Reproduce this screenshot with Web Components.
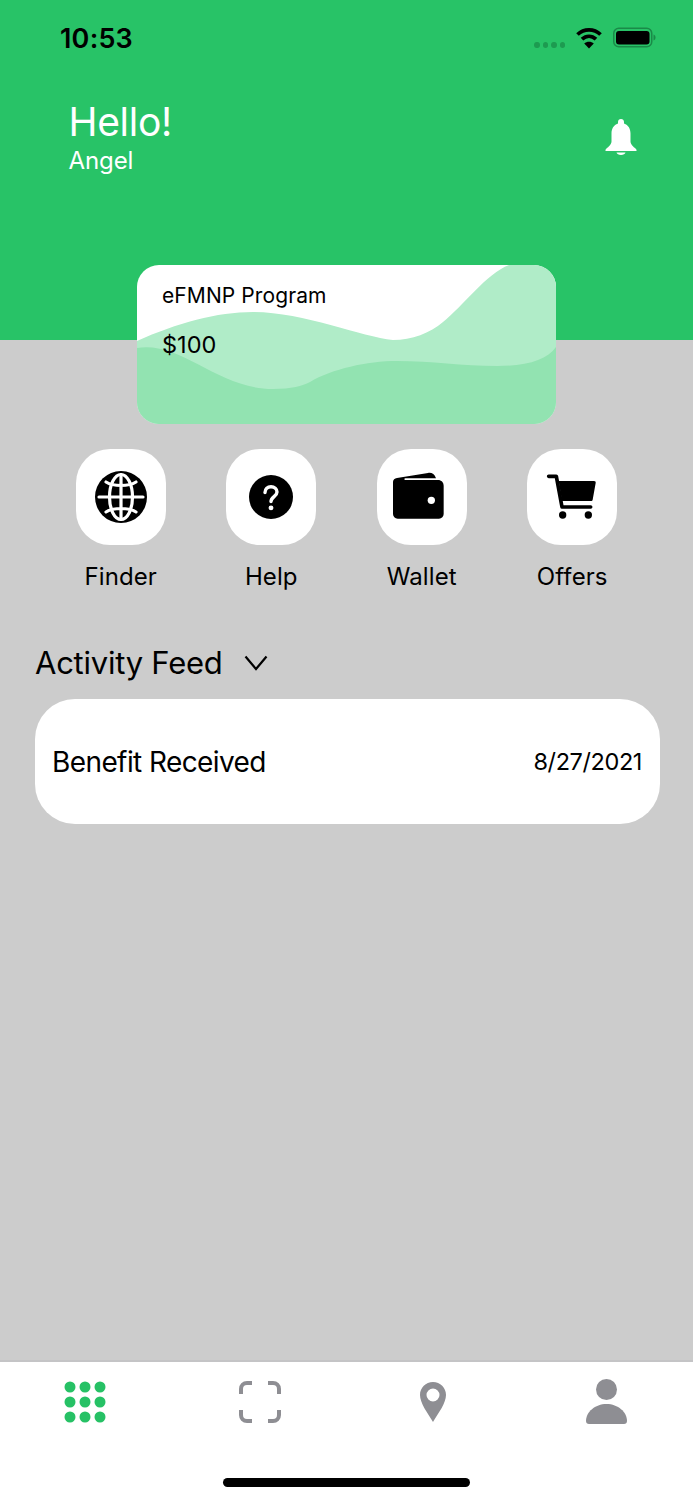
<!DOCTYPE html>
<html>
<head>
<meta charset="utf-8">
<title>Home</title>
<style>
  html, body { margin: 0; padding: 0; }
  body { font-family: Inter, "Noto Sans", sans-serif; color: #000; background: #ccc; }
</style>
</head>
<body>
<app-screen>
  <hero-header slot="hero" greeting="Hello!" name="Angel"></hero-header>
  <benefit-card slot="card" title="eFMNP Program" amount="$100"></benefit-card>
  <quick-row slot="actions">
    <quick-action>
      <svg slot="icon" style="margin-bottom:1px" width="54" height="54" viewBox="0 0 54 54">
        <circle cx="27" cy="27" r="26" fill="#000"/>
        <g fill="none" stroke="#fff" stroke-width="3.200" stroke-linecap="round">
          <ellipse cx="27" cy="27" rx="11.500" ry="22.500"/>
          <path d="M27 4.500v45M5 27h44M12 12c4 2.500 9 3.500 15 3.500S38 14.500 42 12M12 42c4-2.500 9-3.500 15-3.500S38 39.500 42 42"/>
        </g>
      </svg>
      Finder
    </quick-action>
    <quick-action>
      <svg slot="icon" style="margin-bottom:1px" width="44" height="44" viewBox="0 0 44 44">
        <circle cx="22" cy="22" r="22" fill="#000"/>
        <path d="M16 17.500c0-3.600 2.600-5.800 6-5.800s6 2.200 6 5.200c0 4.600-6 4.800-6 9.600" fill="none" stroke="#fff" stroke-width="3.400" stroke-linecap="round"/>
        <circle cx="22" cy="32.800" r="2.400" fill="#fff"/>
      </svg>
      Help
    </quick-action>
    <quick-action>
      <svg slot="icon" style="margin:0 8px 3px 0" width="52" height="47" viewBox="0 0 156 141">
        <path d="M3 30C3 24 8 19 15 18L108 3c10-2 20 3 24 16H40c-4 0-4 5 0 5h98c10 0 17 7 17 17v85c0 8-6 14-14 14H17c-8 0-14-6-14-14Z" fill="#000"/>
        <circle cx="118" cy="85" r="11" fill="#fff"/>
      </svg>
      Wallet
    </quick-action>
    <quick-action>
      <svg slot="icon" style="margin:0 2px 2px 0" width="52" height="46.670" viewBox="555 98 156 140">
        <path d="M566 108h23l17 92h86" fill="none" stroke="#000" stroke-width="11" stroke-linecap="round" stroke-linejoin="round"/>
        <path d="M596 122h106c4 0 6 2 5 6l-9 50c-1 3-2 4-5 4h-87Z" fill="#000"/>
        <circle cx="608" cy="224" r="11" fill="#000"/>
        <circle cx="685" cy="224" r="11" fill="#000"/>
      </svg>
      Offers
    </quick-action>
  </quick-row>
  <activity-feed slot="feed" title="Activity Feed">
    <feed-item date="8/27/2021">Benefit Received</feed-item>
  </activity-feed>
  <tab-bar slot="tabs"></tab-bar>
</app-screen>

<script>
// small helper, every element just sets its template once
class BaseEl extends HTMLElement {
  constructor() {
    super();
    this.attachShadow({ mode: 'open' });
  }
  connectedCallback() {
    this.shadowRoot.innerHTML = this.template();
  }
  template() { return ''; }
}

class AppScreen extends BaseEl {
  template() {
    return `<style>
      :host { display: flex; flex-direction: column; width: 693px; height: 1500px; background: #ccc; overflow: hidden; }
      .main { flex: 1; display: flex; flex-direction: column; }
    </style>
    <slot name="hero"></slot>
    <div class="main">
      <slot name="card"></slot>
      <slot name="actions"></slot>
      <slot name="feed"></slot>
    </div>
    <slot name="tabs"></slot>`;
  }
}

class StatusBar extends BaseEl {
  template() {
    return `<style>
      :host { display: flex; align-items: flex-start; justify-content: space-between; height: 76px; padding: 0 37px 0 60px; box-sizing: border-box; }
      .time { font: 600 27px/30px Inter, sans-serif; color: #000; margin-top: 24px; letter-spacing: .2px; }
      .icons { display: flex; align-items: flex-start; margin-top: 26px; }
      .dots { display: flex; gap: 3px; margin-top: 16px; margin-right: 11px; }
      .dots i { width: 5.500px; height: 6px; border-radius: 50%; background: #1d9b50; }
      svg { display: block; }
      .wifi { margin-right: 11px; }
    </style>
    <div class="time">10:53</div>
    <div class="icons">
      <div class="dots"><i></i><i></i><i></i><i></i></div>
      <svg class="wifi" width="26" height="23" viewBox="0 0 26 23">
        <path d="M1.500 8.500c6.500-6.200 16.500-6.200 23 0M6 13.200c4.200-3.800 9.800-3.800 14 0" fill="none" stroke="#000" stroke-width="3.800"/>
        <path d="M13 22.500 8.200 17.500c2.700-2.200 6.900-2.200 9.600 0Z" fill="#000"/>
      </svg>
      <svg width="43" height="22" viewBox="0 0 43 22">
        <rect x=".75" y="2.250" width="38" height="18.500" rx="5" fill="none" stroke="#1a8a48" stroke-width="1.500"/>
        <rect x="3" y="5" width="33.500" height="13.500" rx="3" fill="#000"/>
        <path d="M40.500 8.500v6c1.500-.6 2-1.800 2-3s-.5-2.400-2-3Z" fill="#1a8a48"/>
      </svg>
    </div>`;
  }
}

class HeroHeader extends BaseEl {
  template() {
    return `<style>
      :host { display: block; height: 340px; background: #28c367; color: #fff; }
      .row { display: flex; justify-content: space-between; padding: 22px 56px 0 68.500px; }
      h1 { margin: 0; font: 400 39px/48px Inter, sans-serif; letter-spacing: -.3px; }
      p { margin: 0; font: 400 24px/30px Inter, sans-serif; letter-spacing: -.1px; }
      svg { display: block; margin-top: 21px; }
    </style>
    <status-bar></status-bar>
    <div class="row">
      <div><h1>${this.getAttribute('greeting')}</h1><p>${this.getAttribute('name')}</p></div>
      <svg width="32" height="36" viewBox="0 0 32 36">
        <path d="M16 0c1.800 0 3 1.300 3 3v1.500c4.500 1.600 6.500 5.400 6.500 10v8c0 2.500 3 5.500 5 7 .6.500 1 1 1 1.500v1H.5v-1c0-.5.400-1 1-1.500 2-1.500 5-4.500 5-7v-8c0-4.600 2-8.400 6.500-10V3c0-1.700 1.200-3 3-3Z" fill="#fff"/>
        <path d="M11.500 33.500h9c-.3 1.500-2.200 2.500-4.500 2.500s-4.200-1-4.500-2.500Z" fill="#fff"/>
      </svg>
    </div>`;
  }
}

class BenefitCard extends BaseEl {
  template() {
    return `<style>
      :host { display: block; position: relative; width: 419px; height: 159px; margin: -75px 0 0 137px; border-radius: 22px; overflow: hidden; background: #fff; }
      svg { position: absolute; inset: 0; display: block; }
      .txt { position: relative; padding: 18px 0 0 25px; }
      .title { font: 400 21px/26px Inter, sans-serif; letter-spacing: .1px; }
      .amt { font: 400 23.500px/30px Inter, sans-serif; margin: 21px 0 0 0; }
    </style>
    <svg width="419" height="159" viewBox="0 0 419 159">
      <path d="M0 76C40 58 80 47 116 47c50 0 109 25 140 28C275 75 293 68 306 57 325 42 350 8 372 0h47v159H0Z" fill="#b0ecc8"/>
      <path d="M0 83c45-7 80 41 136 41 19 0 29-3 37-7 22-13 57-21 87-21 35 0 65 5 100 5 30 0 50-6 59-19v77H0Z" fill="#92e3b1"/>
    </svg>
    <div class="txt">
      <div class="title">${this.getAttribute('title')}</div>
      <div class="amt">${this.getAttribute('amount')}</div>
    </div>`;
  }
}

class QuickRow extends BaseEl {
  template() {
    return `<style>
      :host { display: grid; grid-template-columns: repeat(4, 150.500px); padding-left: 45.500px; margin-top: 25px; }
    </style><slot></slot>`;
  }
}

class QuickAction extends BaseEl {
  template() {
    return `<style>
      :host { display: flex; flex-direction: column; align-items: center; font: 400 24px/30px Inter, sans-serif; letter-spacing: .1px; }
      .tile { width: 90px; height: 96px; border-radius: 34px; background: #fff; display: flex; align-items: center; justify-content: center; margin-bottom: 17px; }
    </style>
    <div class="tile"><slot name="icon"></slot></div>
    <slot></slot>`;
  }
}

class ActivityFeed extends BaseEl {
  template() {
    return `<style>
      :host { display: block; margin: 52px 33px 0 35px; }
      .head { display: flex; align-items: center; height: 38px; margin-bottom: 17px; }
      h2 { margin: 0; font: 400 31px/38px Inter, sans-serif; letter-spacing: -.25px; }
      svg { margin-left: 21px; display: block; }
    </style>
    <div class="head">
      <h2>${this.getAttribute('title')}</h2>
      <svg width="24" height="16" viewBox="0 0 24 16"><path d="M1.500 1.500 12 14 22.500 1.500" fill="none" stroke="#000" stroke-width="2.200"/></svg>
    </div>
    <slot></slot>`;
  }
}

class FeedItem extends BaseEl {
  template() {
    return `<style>
      :host { display: flex; align-items: center; justify-content: space-between; height: 125px; padding: 0 18px 0 17px; box-sizing: border-box; background: #fff; border-radius: 40px; }
      .label { font: 400 28px/34px Inter, sans-serif; letter-spacing: -.6px; }
      .date { font: 400 23.500px/30px Inter, sans-serif; letter-spacing: -.4px; }
    </style>
    <span class="label"><slot></slot></span>
    <span class="date">${this.getAttribute('date')}</span>`;
  }
}

class TabBar extends BaseEl {
  template() {
    const dots = [];
    for (const y of [6, 21, 36]) for (const x of [6, 21, 36]) dots.push(`<circle cx="${x}" cy="${y}" r="5.500"/>`);
    return `<style>
      :host { display: block; height: 140px; background: #fff; border-top: 2px solid #c4c4c6; box-sizing: border-box; }
      .tabs { display: grid; grid-template-columns: 173px 174px 172px 174px; height: 62px; padding-top: 17px; align-items: start; justify-items: center; }
      .tabs svg { display: block; }
      .bar { width: 247px; height: 9px; border-radius: 5px; background: #000; margin: 37px auto 0; }
    </style>
    <div class="tabs">
      <svg style="margin:2px 3px 0 0" width="42" height="42" viewBox="0 0 42 42" fill="#26c165">${dots.join('')}</svg>
      <svg style="margin-top:2px" width="42" height="42" viewBox="0 0 42 42" fill="none" stroke="#8e8e93" stroke-width="4">
        <path d="M2 13V8c0-3.500 2.500-6 6-6h5M29 2h5c3.500 0 6 2.500 6 6v5M40 29v5c0 3.500-2.500 6-6 6h-5M13 40H8c-3.500 0-6-2.500-6-6v-5"/>
      </svg>
      <svg style="margin-top:3px" width="26" height="40" viewBox="0 0 26 40">
        <path fill-rule="evenodd" d="M13 0c7.200 0 13 5.800 13 13 0 8-7.500 18-13 27C7.500 31 0 21 0 13 0 5.800 5.800 0 13 0Zm0 6.500a6.500 6.500 0 1 0 0 13 6.500 6.500 0 0 0 0-13Z" fill="#8e8e93"/>
      </svg>
      <svg width="41" height="45" viewBox="0 0 41 45" fill="#8e8e93">
        <circle cx="20.500" cy="10.500" r="10.500"/>
        <path d="M20.500 25c11.500 0 20.500 8 20.500 17 0 1.800-1.200 3-3 3H3c-1.800 0-3-1.200-3-3 0-9 9-17 20.500-17Z"/>
      </svg>
    </div>
    <div class="bar"></div>`;
  }
}

customElements.define('app-screen', AppScreen);
customElements.define('status-bar', StatusBar);
customElements.define('hero-header', HeroHeader);
customElements.define('benefit-card', BenefitCard);
customElements.define('quick-row', QuickRow);
customElements.define('quick-action', QuickAction);
customElements.define('activity-feed', ActivityFeed);
customElements.define('feed-item', FeedItem);
customElements.define('tab-bar', TabBar);
</script>
</body>
</html>
